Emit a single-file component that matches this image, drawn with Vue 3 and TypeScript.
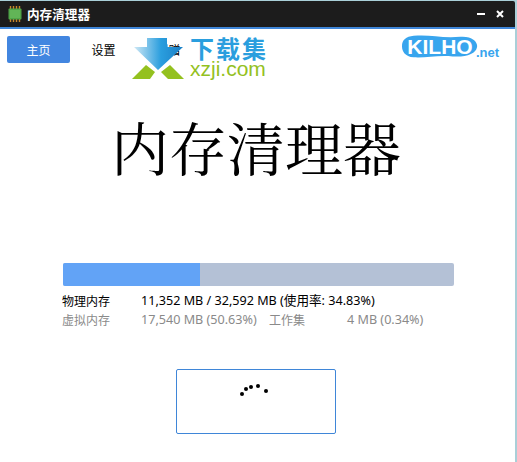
<script setup lang="ts">
const tabs = ['设置', '捐赠']
const dots = [
  { x: 66, y: 25 },
  { x: 70, y: 20 },
  { x: 75, y: 18 },
  { x: 82, y: 17 },
  { x: 90, y: 22 },
]
</script>

<template>
  <div class="window">
    <header class="titlebar">
      <div class="title-left">
        <svg class="chip" width="14" height="16" viewBox="0 0 14 16">
          <path d="M2.5 0v16M5.5 0v16M8.5 0v16M11.5 0v16" stroke="#c8862a" stroke-width="1.4" />
          <rect x="0.5" y="2.5" width="13" height="11" rx="1" fill="#4fa648" />
          <rect x="2" y="4" width="10" height="8" fill="#62b557" />
        </svg>
        <span class="title">内存清理器</span>
      </div>
      <div class="win-btns">
        <svg width="9" height="9" viewBox="0 0 9 9"><rect x="0" y="3" width="8" height="2" fill="#fff" /></svg>
        <svg width="9" height="9" viewBox="0 0 9 9"><path d="M1 1l6 6M7 1L1 7" stroke="#fff" stroke-width="2" /></svg>
      </div>
    </header>

    <main class="body">
      <nav class="nav">
        <button class="tab active">主页</button>
        <button v-for="t in tabs" :key="t" class="tab">{{ t }}</button>
      </nav>

      <div class="wm-xzji">
        <svg class="wm-arrow" width="52" height="41" viewBox="0 0 52 41">
          <defs>
            <linearGradient id="arrowGrad" x1="0" y1="0" x2="1" y2="0">
              <stop offset="0" stop-color="#cfe8f5" />
              <stop offset="0.55" stop-color="#2a9ede" />
              <stop offset="1" stop-color="#1b7fc6" />
            </linearGradient>
          </defs>
          <path d="M0 41L14 27L23 34L18 41Z" fill="#94c11f" />
          <path d="M52 41L38 27L29 34L36 41Z" fill="#94c11f" />
          <path d="M15 0H35V9H51L26 32L2 9H15Z" fill="url(#arrowGrad)" />
        </svg>
        <div class="wm-text">
          <span class="wm-cn">下载集</span>
          <span class="wm-en">xzji.com</span>
        </div>
      </div>

      <div class="wm-kilho">
        <div class="kilho-badge">
          <svg class="kilho-shape" width="76" height="24" viewBox="0 0 78 28" preserveAspectRatio="none">
            <path d="M12 1C28 -1 40 4 60 2C72 1 78 8 77 14C76 22 66 26 52 25C38 23 24 27 12 26C3 25 0 19 0 13C0 6 4 2 12 1Z" fill="#38a5ee" />
          </svg>
          <span class="kilho-text">KILHO</span>
        </div>
        <span class="kilho-net">.net</span>
      </div>

      <h1 class="heading">内存清理器</h1>

      <section class="stats">
        <div class="bar"><div class="bar-fill" :style="{ width: '35%' }"></div></div>
        <div class="row primary">
          <span class="label">物理内存</span>
          <span class="num">11,352 MB / 32,592 MB (使用率: 34.83%)</span>
        </div>
        <div class="row muted">
          <span class="label">虚拟内存</span>
          <span class="num virt">17,540 MB (50.63%)</span>
          <span class="wk-label">工作集</span>
          <span class="num">4 MB (0.34%)</span>
        </div>
      </section>

      <div class="action">
        <button class="clean">
          <svg width="160" height="65" viewBox="0 0 160 65">
            <circle v-for="(d, i) in dots" :key="i" :cx="d.x" :cy="d.y" r="2" fill="#000" />
          </svg>
        </button>
      </div>
    </main>
  </div>
</template>

<style>
html, body { margin: 0; background: #a9cfd8; }
</style>

<style scoped>
.window {
  width: 515px;
  height: 462px;
  padding-top: 1px;
  box-sizing: border-box;
  font-family: "Noto Sans CJK SC", "Noto Sans", sans-serif;
  display: flex;
  flex-direction: column;
}
.titlebar {
  height: 26px;
  background: #1c1c1c;
  border-bottom: 2px solid #3f86d8;
  border-top-right-radius: 2px;
  display: flex;
  align-items: center;
  justify-content: space-between;
  color: #fff;
  padding: 0 10px 0 8px;
  flex: none;
}
.title-left { display: flex; align-items: center; gap: 5px; }
.title { font-size: 12.6px; font-weight: 700; line-height: 1; }
.win-btns { display: flex; gap: 10px; align-items: center; }
.body { flex: 1; background: #fff; position: relative; }
.nav { display: flex; padding: 7px 0 0 7px; height: 27px; }
.tab {
  width: 63px;
  height: 27px;
  border: none;
  background: none;
  font: 12px "Noto Sans CJK SC", sans-serif;
  color: #000;
  padding: 0;
  margin-right: 2px;
}
.tab.active { background: #4286e0; color: #fff; border-radius: 2px; }
.wm-xzji {
  position: absolute;
  left: 132px;
  top: 9px;
  display: flex;
  gap: 6px;
}
.wm-arrow { display: block; }
.wm-text { display: flex; flex-direction: column; margin-top: -2px; }
.wm-cn { font-size: 24px; font-weight: 700; color: #2a9ede; line-height: 24px; letter-spacing: 2px; }
.wm-en { font: 21px/20px "Liberation Sans", sans-serif; color: #94c11f; margin-top: -1px; }
.wm-kilho {
  position: absolute;
  left: 402px;
  top: 6px;
  display: flex;
  align-items: flex-end;
}
.kilho-badge { position: relative; width: 76px; height: 24px; }
.kilho-shape { position: absolute; left: 0; top: 0; }
.kilho-text {
  position: relative;
  display: block;
  text-align: center;
  color: #fff;
  font: 700 21px/24px "Liberation Sans", sans-serif;
}
.kilho-net { font: 700 13px/13px "Liberation Sans", sans-serif; color: #38a5ee; margin-left: -2px; }
.heading {
  font: 400 58px/70px "Noto Serif CJK SC", "Liberation Serif", serif;
  text-align: center;
  margin: 48px 0 0;
  padding-right: 3px;
  color: #000;
}
.stats { padding: 82px 0 0 62px; }
.bar { width: 391px; height: 23px; background: #b4c1d6; border-radius: 2px; overflow: hidden; margin-left: 1px; }
.bar-fill { height: 100%; background: #62a3f6; }
.row { display: flex; font-size: 12px; line-height: 19px; font-family: "Noto Sans CJK SC", sans-serif; }
.row.primary { margin-top: 5px; color: #000; }
.row.muted { color: #8a8a8a; }
.label { width: 79px; }
.num { font-family: "Noto Sans", "Noto Sans CJK SC", sans-serif; font-size: 12.6px; }
.virt { width: 128px; }
.wk-label { width: 78px; }
.action { display: flex; justify-content: center; margin-top: 40px; margin-right: 4px; }
.clean {
  width: 160px;
  height: 65px;
  border: 1px solid #3f86d8;
  background: #fff;
  border-radius: 2px;
  padding: 0;
  box-sizing: border-box;
}
.clean svg { display: block; margin: -1px; }
</style>
